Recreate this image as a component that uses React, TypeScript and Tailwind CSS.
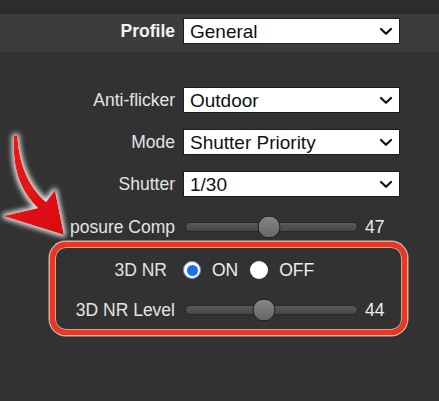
import React from "react";

const font = { fontFamily: '"Liberation Sans", Arial, sans-serif' };

const Chevron = () => (
  <svg width="14" height="9" viewBox="0 0 14 9" className="shrink-0">
    <path d="M2 2 L7 6.8 L12 2" fill="none" stroke="#111" strokeWidth="2.2" strokeLinecap="round" strokeLinejoin="round" />
  </svg>
);

const Select = ({ value }: { value: string }) => (
  <div className="flex h-[26px] w-[217px] items-center justify-between border border-[#1c1c1c] bg-white pl-[6px] pr-[6px] text-[19px] leading-none text-[#111]">
    <span>{value}</span>
    <Chevron />
  </div>
);

const Slider = ({ pos, value }: { pos: number; value: string }) => (
  <div className="flex items-center">
    <div className="relative ml-[2px] h-[10px] w-[173px] rounded-full border border-[#262626] bg-gradient-to-b from-[#5a5a5a] to-[#474747]">
      <div
        className="absolute top-1/2 h-[23px] w-[23px] -translate-x-1/2 -translate-y-1/2 rounded-full border-[1.5px] border-[#1e1e1e] bg-gradient-to-b from-[#858585] to-[#666]"
        style={{ left: pos }}
      />
    </div>
    <span className="ml-[7px] text-[17.5px] text-[#eee]">{value}</span>
  </div>
);

const Row = ({ label, labelW = 175, children, className = "" }: { label: React.ReactNode; labelW?: number; children: React.ReactNode; className?: string }) => (
  <div className={`flex items-center ${className}`}>
    <div className="flex justify-end whitespace-nowrap text-[17.5px] text-[#e4e4e4]" style={{ width: labelW }}>
      {label}
    </div>
    <div className="ml-[8px]">{children}</div>
  </div>
);

const Arrow = () => (
  <svg className="absolute left-0 top-[128px]" width="80" height="120" viewBox="0 128 80 120">
    <defs>
      <filter id="glow" x="-30%" y="-30%" width="160%" height="160%">
        <feMorphology in="SourceAlpha" operator="dilate" radius="1.5" result="d" />
        <feGaussianBlur in="d" stdDeviation="2.6" result="b" />
        <feFlood floodColor="#ffffff" floodOpacity="0.85" />
        <feComposite in2="b" operator="in" result="g" />
        <feMerge>
          <feMergeNode in="g" />
          <feMergeNode in="SourceGraphic" />
        </feMerge>
      </filter>
      <linearGradient id="red" x1="0" y1="0" x2="1" y2="1">
        <stop offset="0" stopColor="#f01818" />
        <stop offset="1" stopColor="#d80c10" />
      </linearGradient>
    </defs>
    <path
      d="M14 136 C12 168, 20 191, 38 208 L3 216 L64 235 L55 190 L46 202 C28 186, 19 164, 17.5 136 Z"
      fill="url(#red)"
      filter="url(#glow)"
    />
  </svg>
);

export default function App() {
  return (
    <div className="relative h-[401px] w-[439px] overflow-hidden bg-[#323232]" style={font}>
      <div className="h-[14px] bg-[#2c2c2c]" />
      <div className="flex h-[38px] items-start bg-[#3c3c3c] pt-[4px]">
        <Row label={<span className="font-bold text-[#f2f2f2]">Profile</span>}>
          <Select value="General" />
        </Row>
      </div>

      <div className="mt-[27px] flex flex-col">
        <Row label="Anti-flicker" className="h-[42px]">
          <Select value="Outdoor" />
        </Row>
        <Row label="Mode" className="h-[42px]">
          <Select value="Shutter Priority" />
        </Row>
        <Row label="Shutter" className="h-[42px]">
          <Select value="1/30" />
        </Row>
        <Row label="posure Comp" labelW={107} className="ml-[68px] mt-[7px] h-[30px]">
          <Slider pos={83} value="47" />
        </Row>

        <div className="ml-[50px] w-[357px] rounded-[16px] border-[5px] border-[#f0341e] pt-[3px] shadow-[0_0_0_1.5px_#d8b0a6,inset_0_0_0_1px_#caa49a]">
          <Row label={<span className="mr-[8px]">3D NR</span>} labelW={120} className="h-[40px]">
            <div className="flex items-center text-[17.5px] text-[#eee]">
              <span className="flex h-[18px] w-[18px] items-center justify-center rounded-full border-[1.5px] border-[#5c9af0] bg-white">
                <span className="h-[11px] w-[11px] rounded-full bg-[#1b6fe8]" />
              </span>
              <span className="ml-[11px]">ON</span>
              <span className="ml-[12px] h-[18px] w-[18px] rounded-full bg-white" />
              <span className="ml-[11px]">OFF</span>
            </div>
          </Row>
          <Row label="3D NR Level" labelW={120} className="h-[40px]">
            <Slider pos={78} value="44" />
          </Row>
        </div>
      </div>

      <Arrow />
    </div>
  );
}
